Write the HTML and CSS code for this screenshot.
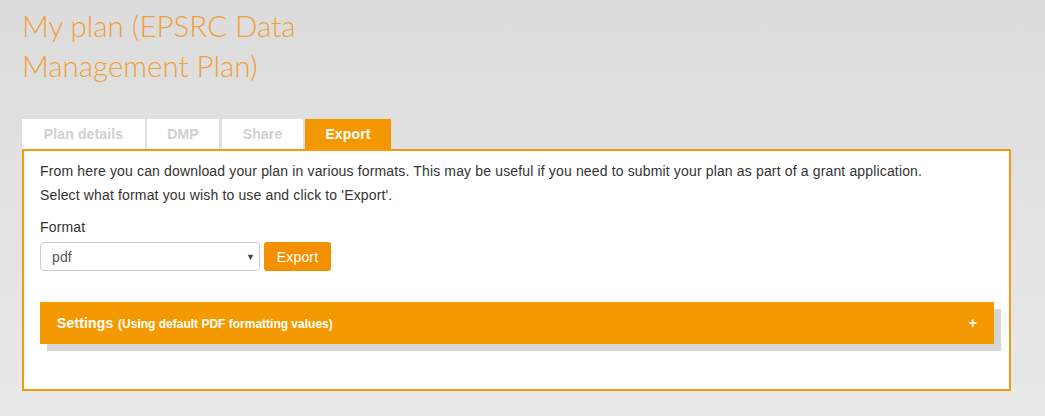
FILE: index.html
```html
<!DOCTYPE html>
<html lang="en">
<head>
<meta charset="utf-8">
<title>My plan - Export</title>
<link rel="stylesheet" href="styles.css">
</head>
<body>
<div class="page">
  <h1 class="title">My plan (EPSRC Data Management Plan)</h1>
  <ul class="tabs">
    <li class="tab tab-details">Plan details</li>
    <li class="tab tab-dmp">DMP</li>
    <li class="tab tab-share">Share</li>
    <li class="tab tab-export active">Export</li>
  </ul>
  <div class="panel">
    <p class="intro">From here you can download your plan in various formats. This may be useful if you need to submit your plan as part of a grant application.<br>Select what format you wish to use and click to 'Export'.</p>
    <label class="label">Format</label>
    <div class="form-row">
      <div class="select">
        <span>pdf</span>
        <span class="caret">&#9660;</span>
      </div>
      <button class="btn">Export</button>
    </div>
    <div class="settings">
      <div class="settings-title"><strong>Settings</strong> <small>(Using default PDF formatting values)</small></div>
      <span class="plus">+</span>
    </div>
  </div>
</div>
</body>
</html>
```
FILE: styles.css
```css
html, body {
  margin: 0;
  padding: 0;
}
body {
  background: linear-gradient(#dcdcdc, #e9e9e9);
  min-height: 416px;
  font-family: "Liberation Sans", Arial, sans-serif;
  color: #333;
  letter-spacing: 0.15px;
}
.page {
  padding: 6px 0 0 22px;
  width: 989px;
}
.title {
  margin: 0;
  width: 320px;
  font-family: Lato, "Open Sans", sans-serif;
  font-weight: 300;
  font-size: 29.5px;
  line-height: 40px;
  letter-spacing: 0;
  color: #f0a03a;
}
.tabs {
  list-style: none;
  margin: 33px 0 0 0;
  padding: 0;
  display: flex;
}
.tab {
  background: #fff;
  color: #d0d0d0;
  font-weight: bold;
  font-size: 14px;
  height: 30px;
  line-height: 31px;
  text-align: center;
}
.tab-details { width: 123px; margin-right: 2px; }
.tab-dmp { width: 72px; margin-right: 3px; }
.tab-share { width: 81px; margin-right: 2px; }
.tab-export { width: 86px; }
.tab.active {
  background: #f39800;
  color: #fff;
}
.panel {
  background: #fff;
  border: 2px solid #f39a10;
  padding: 8px 16px 45px 16px;
}
.intro {
  margin: 0;
  font-size: 14px;
  line-height: 24px;
}
.label {
  display: block;
  margin-top: 8px;
  font-size: 14px;
  line-height: 24px;
}
.form-row {
  display: flex;
  gap: 4px;
  margin-top: 3px;
}
.select {
  box-sizing: border-box;
  width: 220px;
  height: 29px;
  border: 1px solid #ccc;
  border-radius: 4px;
  display: flex;
  align-items: center;
  justify-content: space-between;
  padding: 0 4px 0 11px;
  font-size: 14px;
  color: #555;
}
.caret {
  font-size: 9px;
  color: #444;
}
.btn {
  box-sizing: border-box;
  height: 29px;
  width: 67px;
  border: 0;
  border-radius: 3px;
  background: #f39000;
  color: #fff;
  font-family: "Liberation Sans", Arial, sans-serif;
  font-size: 14px;
  letter-spacing: 0.15px;
  padding: 0;
}
.settings {
  margin-top: 31px;
  height: 42px;
  background: #f49a00;
  box-shadow: 7px 7px 0 #d6d6d6;
  display: flex;
  align-items: center;
  justify-content: space-between;
  padding: 0 17px 0 17px;
  color: #fff;
  width: 920px;
}
.settings-title strong {
  font-size: 14px;
}
.settings-title small {
  font-size: 12px;
  font-weight: bold;
  letter-spacing: 0;
}
.plus {
  font-weight: bold;
  font-size: 14px;
}
```
